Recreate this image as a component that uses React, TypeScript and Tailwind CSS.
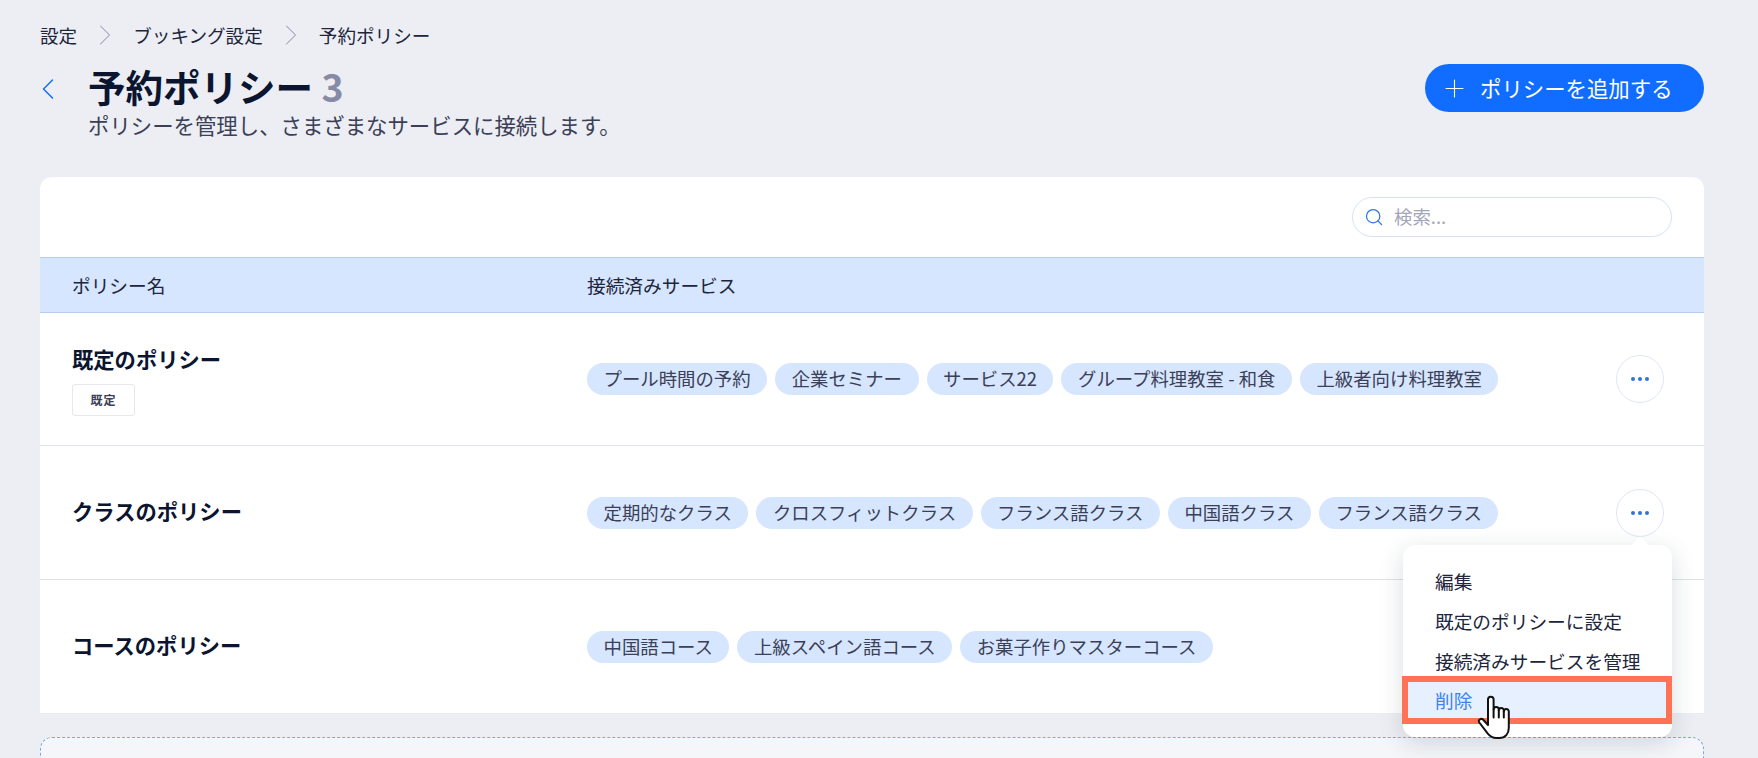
import { Plus, Search, ChevronLeft, ChevronRight } from 'lucide-react';

const FONT = "font-['Noto_Sans_CJK_JP','Noto_Sans',sans-serif]";

const POLICIES = [
  {
    name: '既定のポリシー',
    isDefault: true,
    services: ['プール時間の予約', '企業セミナー', 'サービス22', 'グループ料理教室 - 和食', '上級者向け料理教室'],
  },
  {
    name: 'クラスのポリシー',
    isDefault: false,
    services: ['定期的なクラス', 'クロスフィットクラス', 'フランス語クラス', '中国語クラス', 'フランス語クラス'],
  },
  {
    name: 'コースのポリシー',
    isDefault: false,
    services: ['中国語コース', '上級スペイン語コース', 'お菓子作りマスターコース'],
  },
];

function Crumb({ label }: { label: string }) {
  return <span className="text-[18.6px] leading-6 text-[#20253c]">{label}</span>;
}

function MoreButton() {
  return (
    <button className="flex h-12 w-12 items-center justify-center gap-[3px] rounded-full border border-[#dfe7f5] bg-white">
      <span className="h-1 w-1 rounded-full bg-[#2c73e0]" />
      <span className="h-1 w-1 rounded-full bg-[#2c73e0]" />
      <span className="h-1 w-1 rounded-full bg-[#2c73e0]" />
    </button>
  );
}

function HandCursor() {
  return (
    <svg
      viewBox="0 0 35 44"
      width="35"
      height="44"
      className="absolute left-[74px] top-[150px]"
      fill="white"
      stroke="#111"
      strokeWidth="2"
      strokeLinejoin="round"
      strokeLinecap="round"
    >
      <path d="M11 25V4.500a2.800 2.800 0 0 1 5.600 0V14.500a2.600 2.600 0 0 1 5.200 0v1a2.500 2.500 0 0 1 5 0v1a2.500 2.500 0 0 1 5 0V33c0 5.500-3.500 10-9.500 10h-3c-4 0-6.300-1.600-8.500-4.300L2.300 27.500c-1.800-2.300 1.700-4.700 3.700-3L11 30z" />
      <path d="M16.600 14.500v8M21.800 15.500v7M26.800 16.500v6" fill="none" />
    </svg>
  );
}

function ActionMenu() {
  return (
    <div className="absolute left-[1403px] top-[545px] h-[192px] w-[269px] rounded-xl bg-white shadow-[0_6px_24px_rgba(22,45,61,0.16)]">
      <div className="absolute -top-[6px] left-[231px] h-3 w-3 rotate-45 bg-white" />
      <div className="relative flex flex-col pt-4">
        <div className="flex h-10 items-center pl-8 text-[18.7px] text-[#20253c]">編集</div>
        <div className="flex h-10 items-center pl-8 text-[18.7px] text-[#20253c]">既定のポリシーに設定</div>
        <div className="flex h-10 items-center pl-8 text-[18.7px] text-[#20253c]">接続済みサービスを管理</div>
        <div className="-ml-px -mt-[5px] flex h-12 items-center border-[6px] border-[#ff7256] bg-[#e7f0ff] pl-[27px] text-[18.7px] text-[#3f84e8]">
          削除
        </div>
      </div>
      <HandCursor />
    </div>
  );
}

export default function App() {
  return (
    <div className={`${FONT} relative h-[758px] w-full overflow-hidden bg-[#eceef3] pl-10 pr-[54px] pt-[23px]`}>
      <nav className="flex h-6 items-center">
        <Crumb label="設定" />
        <ChevronRight size={36} strokeWidth={0.7} className="mx-[10px] text-[#9a9eb4]" />
        <Crumb label="ブッキング設定" />
        <ChevronRight size={36} strokeWidth={0.7} className="mx-[10px] text-[#9a9eb4]" />
        <Crumb label="予約ポリシー" />
      </nav>

      <header className="mt-[17px] flex items-start justify-between">
        <div className="flex">
          <ChevronLeft size={36} strokeWidth={1} className="-ml-[10px] mr-[22px] mt-[7px] text-[#116dff]" />
          <div>
            <h1 className="text-[37.5px] font-bold leading-[44px] text-[#0c1530]">
              予約ポリシー <span className="text-[#868aa5]">3</span>
            </h1>
            <p className="mt-[3px] text-[21.4px] leading-7 text-[#3b4057]">
              ポリシーを管理し、さまざまなサービスに接続します。
            </p>
          </div>
        </div>
        <button className="flex h-12 w-[279px] items-center gap-[11px] rounded-full bg-[#116dff] pl-[15px] text-[21.4px] text-white">
          <Plus size={29} strokeWidth={0.9} />
          ポリシーを追加する
        </button>
      </header>

      <main className="mt-[38px] rounded-t-xl bg-white">
        <div className="flex h-20 items-center justify-end pr-8">
          <div className="flex h-10 w-[320px] items-center gap-[10px] rounded-full border border-[#d5e2f5] bg-white pl-[11px]">
            <Search size={20} strokeWidth={1.5} className="text-[#2f76de]" />
            <span className="text-[18.4px] text-[#a3a6ba]">検索...</span>
          </div>
        </div>

        <div className="flex h-14 items-center border-y border-[#b5cdee] bg-[#d6e6fe] text-[18.7px] text-[#20253c]">
          <div className="w-[547px] pl-8">ポリシー名</div>
          <div>接続済みサービス</div>
        </div>

        <div>
          {POLICIES.map((policy, i) => (
            <div
              key={policy.name}
              className="flex h-[134px] items-center border-b border-[#dfe2e8] first:h-[133px] last:h-[133px] last:border-b-0"
            >
              <div className={`w-[547px] pl-8 ${policy.isDefault ? 'pt-[3px]' : 'pb-[3px]'}`}>
                <div className="text-[21.3px] font-bold leading-7 text-[#0c1530]">{policy.name}</div>
                {policy.isDefault && (
                  <div className="mt-[11px] flex h-8 w-[63px] items-center justify-center rounded-[3px] border border-[#e6e8ee] text-[12px] font-bold tracking-[1px] text-[#3b4057]">
                    既定
                  </div>
                )}
              </div>
              <div className="flex flex-1 gap-2">
                {policy.services.map((s, idx) => (
                  <span
                    key={idx}
                    className="flex h-8 items-center whitespace-nowrap rounded-full bg-[#d6e6fe] px-[16.5px] text-[18.4px] text-[#3b4057]"
                  >
                    {s}
                  </span>
                ))}
              </div>
              {i < 2 && (
                <div className="pr-10">
                  <MoreButton />
                </div>
              )}
            </div>
          ))}
        </div>
      </main>

      <div className="mt-6 h-20 rounded-t-xl border border-dashed border-[#7fa8e4] bg-[#f4f6f9]" />

      <ActionMenu />
    </div>
  );
}
